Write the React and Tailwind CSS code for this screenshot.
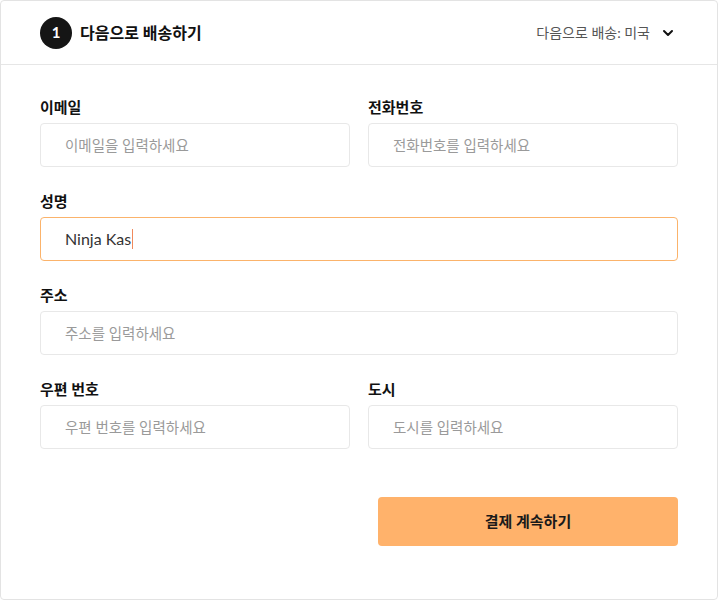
import React from 'react';
import { ChevronDown } from 'lucide-react';

const font = { fontFamily: '"Lato", "Noto Sans CJK KR", sans-serif' };

const Field = ({ label, placeholder, value, focused }) => (
    <div className="flex flex-col gap-[6px]">
        <label className="text-[15px] leading-5 font-bold text-[#111]">{label}</label>
        {focused ? (
            <div className="h-[44px] rounded-[4px] border border-[#fbb36b] flex items-center pl-6 text-[16px] text-[#333]">
                <span>{value}</span>
                <span className="w-px h-5 bg-[#f08a5d] ml-px" />
            </div>
        ) : (
            <input
                placeholder={placeholder}
                className="h-[44px] rounded-[4px] border border-[#e8e8e8] pl-6 text-[14.5px] text-[#333] placeholder:text-[#9a9a9a] outline-none"
            />
        )}
    </div>
);

export default function App() {
    return (
        <div style={font} className="w-[718px] h-[600px] bg-white">
            <div className="h-full border border-[#e3e3e3] rounded-[4px] flex flex-col">
                <div className="h-[64px] flex items-center justify-between pl-[39px] pr-[41px] border-b border-[#e6e6e6]">
                    <div className="flex items-center gap-2">
                        <div className="w-8 h-8 rounded-full bg-[#151515] text-white flex items-center justify-center text-[15px] font-bold">1</div>
                        <span className="text-[16px] font-bold text-[#111]">다음으로 배송하기</span>
                    </div>
                    <div className="flex items-center gap-[10px] text-[14px] text-[#555]">
                        <span>다음으로 배송: 미국</span>
                        <ChevronDown size={16} strokeWidth={3} className="text-[#111]" />
                    </div>
                </div>

                <div className="px-[39px] pt-[32px] flex flex-col gap-[24px]">
                    <div className="grid grid-cols-2 gap-[18px]">
                        <Field label="이메일" placeholder="이메일을 입력하세요" />
                        <Field label="전화번호" placeholder="전화번호를 입력하세요" />
                    </div>
                    <Field label="성명" value="Ninja Kas" focused />
                    <Field label="주소" placeholder="주소를 입력하세요" />
                    <div className="grid grid-cols-2 gap-[18px]">
                        <Field label="우편 번호" placeholder="우편 번호를 입력하세요" />
                        <Field label="도시" placeholder="도시를 입력하세요" />
                    </div>
                    <div className="flex justify-end mt-6">
                        <button className="w-[300px] h-[49px] rounded-[4px] bg-[#ffb26b] text-[15px] font-bold text-[#1a1a1a]">
                            결제 계속하기
                        </button>
                    </div>
                </div>
            </div>
        </div>
    );
}
